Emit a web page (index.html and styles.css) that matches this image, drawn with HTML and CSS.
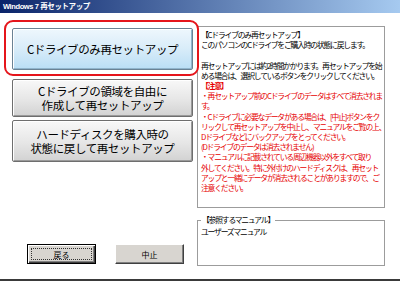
FILE: index.html
```html
<!DOCTYPE html>
<html lang="ja">
<head>
<meta charset="utf-8">
<link rel="stylesheet" href="styles.css">
<title>Windows 7 再セットアップ</title>
</head>
<body>
<div class="window">
  <div class="titlebar">Windows 7 再セットアップ</div>
  <div class="client">
    <div class="menu">
      <div class="choice choice-on">Cドライブのみ再セットアップ<span class="ring"></span></div>
      <div class="choice choice-mid">Cドライブの領域を自由に<br>作成して再セットアップ</div>
      <div class="choice">ハードディスクを購入時の<br>状態に戻して再セットアップ</div>
      <div class="actions">
        <div class="btn btn-focus">戻る</div>
        <div class="btn">中止</div>
      </div>
    </div>
    <div class="info">
      <div class="desc">
        【Cドライブのみ再セットアップ】<br>
        このパソコンのCドライブをご購入時の状態に戻します。<br>
        <br>
        再セットアップには約2時間かかります。再セットアップを始<br>
        める場合は、選択しているボタンをクリックしてください。<br>
        <span class="warn"><b>【注意】</b><br>
        ・再セットアップ前のCドライブのデータはすべて消去されま<br>
        す。<br>
        ・Cドライブに必要なデータがある場合は、[中止]ボタンをク<br>
        リックして再セットアップを中止し、マニュアルをご覧の上、<br>
        Dドライブなどにバックアップをとってください。<br>
        (Dドライブのデータは消去されません)<br>
        ・マニュアルに記載されている周辺機器以外をすべて取り<br>
        外してください。特に外付けのハードディスクは、再セット<br>
        アップと一緒にデータが消去されることがありますので、ご<br>
        注意ください。</span>
      </div>
      <fieldset class="manual">
        <legend>【参照するマニュアル】</legend>
        ユーザーズマニュアル
      </fieldset>
    </div>
  </div>
</div>
</body>
</html>
```

FILE: styles.css
```css
body {
	margin: 0;
	background: #fff;
	font-family: "Noto Sans CJK JP", sans-serif;
	color: #000;
}
.window {
	width: 400px;
	height: 281px;
	box-sizing: border-box;
	border-bottom: 2px solid #3a3a3a;
	overflow: hidden;
}
.titlebar {
	height: 13px;
	line-height: 13px;
	padding-left: 3px;
	background: linear-gradient(to right, #0a246a, #a6caf0);
	color: #fff;
	font: bold 7.5px "Liberation Sans", "Noto Sans CJK JP", sans-serif;
	letter-spacing: -0.4px;
	white-space: nowrap;
}
.client {
	display: flex;
}

/* left column */
.menu {
	width: 197px;
	box-sizing: border-box;
	padding: 15px 0 0 12px;
	display: flex;
	flex-direction: column;
}
.choice {
	position: relative;
	width: 181px;
	height: 42px;
	box-sizing: border-box;
	display: flex;
	align-items: center;
	justify-content: center;
	text-align: center;
	font-size: 11.5px;
	letter-spacing: -0.4px;
	line-height: 14px;
	border: 1px solid #6e6e6e;
	border-radius: 2px;
	background: linear-gradient(#f8f8f8, #e6e6e6 55%, #d2d2d2);
	box-shadow: inset 1px 1px 0 #fff, inset -1px -1px 0 #9a9a9a;
	margin-top: 3px;
}
.choice-on {
	margin-top: 0;
	margin-bottom: 6px;
	border-color: #6a8294;
	background: linear-gradient(#eef7fd, #d8ecf9 50%, #b9def5);
	box-shadow: inset 1px 1px 0 #fff, inset -1px -1px 0 #8fb4cc;
}
.choice-mid {
	height: 38px;
}
.ring {
	position: absolute;
	left: -9px;
	top: -9px;
	right: -7px;
	bottom: -7px;
	border: 2.5px solid #e5151b;
	border-radius: 9px;
}
.actions {
	display: flex;
	gap: 19px;
	margin: 82px 0 0 15px;
}
.btn {
	position: relative;
	width: 69px;
	height: 20px;
	box-sizing: border-box;
	display: flex;
	align-items: center;
	justify-content: center;
	font-size: 8px;
	background: #d8d5d0;
	border: 1px solid;
	border-color: #fff #404040 #404040 #fff;
	box-shadow: inset -1px -1px 0 #808080;
}
.btn-focus {
	border-color: #000;
	box-shadow: inset 1px 1px 0 #fff, inset -1px -1px 0 #404040, inset -2px -2px 0 #808080;
}
.btn-focus::after {
	content: "";
	position: absolute;
	left: 3px;
	top: 3px;
	right: 3px;
	bottom: 3px;
	border: 1px dotted #333;
}

/* right column */
.info {
	width: 188px;
	padding-top: 13px;
}
.desc {
	height: 182px;
	box-sizing: border-box;
	border: 1px solid #9c9c9c;
	padding: 3px 0 0 3px;
	font-size: 7.8px;
	letter-spacing: -1.2px;
	line-height: 10.2px;
	white-space: nowrap;
	overflow: hidden;
}
.warn {
	color: #e60000;
}
.manual {
	margin: 7px 0 0;
	height: 51px;
	box-sizing: border-box;
	padding: 2px 3px;
	border: 1px solid #9c9c9c;
	font-size: 7.8px;
	letter-spacing: -1.2px;
	line-height: 10.2px;
	white-space: nowrap;
}
.manual legend {
	padding: 0 1px;
	line-height: 10px;
}
```
